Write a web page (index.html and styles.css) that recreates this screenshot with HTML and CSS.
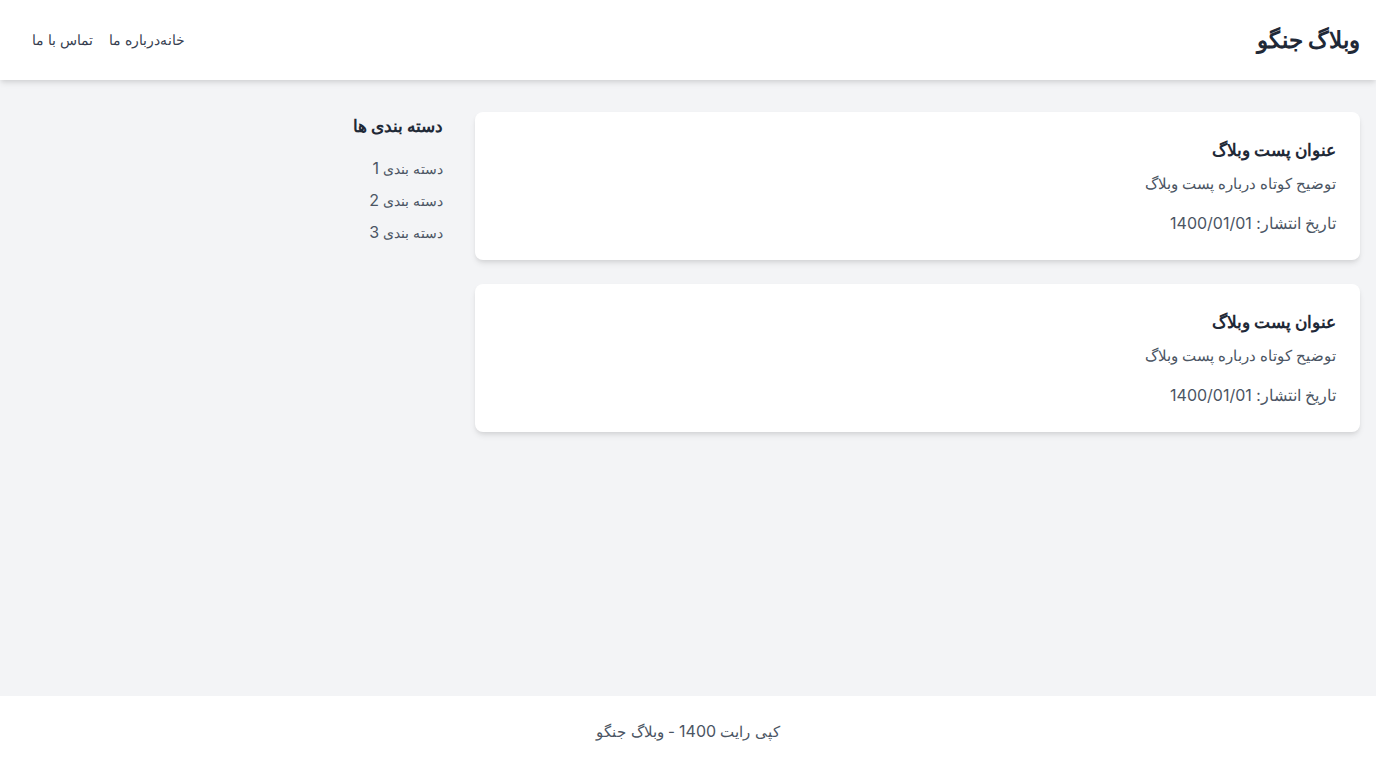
FILE: index.html
```html
<!DOCTYPE html>
<html lang="fa" dir="rtl">
<head>
<meta charset="utf-8">
<title>وبلاگ جنگو</title>
<link rel="stylesheet" href="styles.css">
</head>
<body>
<div class="page">
  <header class="header">
    <h1 class="brand">وبلاگ جنگو</h1>
    <nav class="nav">
      <a href="#" class="nav-link">خانه</a><a href="#" class="nav-link gap">درباره ما</a><a href="#" class="nav-link gap">تماس با ما</a>
    </nav>
  </header>
  <main class="main">
    <div class="grid">
      <section class="posts">
        <article class="card">
          <h2 class="card-title">عنوان پست وبلاگ</h2>
          <p class="card-desc">توضیح کوتاه درباره پست وبلاگ</p>
          <p class="card-date">تاریخ انتشار: <span class="num">1400/01/01</span></p>
        </article>
        <article class="card">
          <h2 class="card-title">عنوان پست وبلاگ</h2>
          <p class="card-desc">توضیح کوتاه درباره پست وبلاگ</p>
          <p class="card-date">تاریخ انتشار: <span class="num">1400/01/01</span></p>
        </article>
      </section>
      <aside class="sidebar">
        <h3 class="side-title">دسته بندی ها</h3>
        <ul class="side-list">
          <li class="side-item"><a href="#" class="side-link">دسته بندی <span class="num">1</span></a></li>
          <li class="side-item"><a href="#" class="side-link">دسته بندی <span class="num">2</span></a></li>
          <li class="side-item"><a href="#" class="side-link">دسته بندی <span class="num">3</span></a></li>
        </ul>
      </aside>
    </div>
  </main>
  <footer class="footer">
    <p class="footer-text">کپی رایت <span class="num">1400</span> - وبلاگ جنگو</p>
  </footer>
</div>
</body>
</html>
```

FILE: styles.css
```css
* { box-sizing: border-box; }
html, body { margin: 0; padding: 0; }
body {
  font-family: Inter, "Liberation Sans", sans-serif;
  font-size: 16px;
  line-height: 24px;
  background: #f3f4f6;
  color: #1f2937;
}
h1, h2, h3, p, ul { margin: 0; padding: 0; }
ul { list-style: none; }
a { text-decoration: none; color: inherit; }

.num { font-size: 16px; line-height: 1; }

.page {
  min-height: 100vh;
  display: flex;
  flex-direction: column;
}

.header {
  background: #ffffff;
  height: 80px;
  padding: 0 16px;
  display: flex;
  align-items: center;
  justify-content: space-between;
  box-shadow: 0 4px 6px -1px rgba(0,0,0,0.1), 0 2px 4px -1px rgba(0,0,0,0.06);
  position: relative;
  z-index: 1;
}
.brand {
  font-size: 23px;
  line-height: 32px;
  font-weight: 700;
  color: #1f2937;
}
.nav { display: flex; }
.nav-link { color: #374151; font-size: 14px; line-height: 24px; }
.nav-link.gap { margin-left: 16px; }

.main {
  flex-grow: 1;
  padding: 32px 16px;
}
.grid {
  display: grid;
  grid-template-columns: repeat(3, 1fr);
  gap: 32px;
}
.posts {
  grid-column: span 2;
  display: flex;
  flex-direction: column;
  gap: 24px;
}
.card {
  background: #ffffff;
  border-radius: 8px;
  padding: 24px;
  box-shadow: 0 4px 6px -1px rgba(0,0,0,0.1), 0 2px 4px -1px rgba(0,0,0,0.06);
}
.card-title {
  font-size: 17px;
  line-height: 28px;
  height: 28px;
  font-weight: 700;
  color: #1f2937;
  margin-bottom: 8px;
}
.card-desc {
  color: #4b5563;
  font-size: 14.5px;
  line-height: 24px;
  height: 24px;
  margin-bottom: 16px;
}
.card-date {
  color: #4b5563;
  font-size: 15.5px;
  line-height: 24px;
  height: 24px;
}

.side-title {
  font-size: 17px;
  line-height: 28px;
  height: 28px;
  font-weight: 700;
  color: #1f2937;
  margin-bottom: 16px;
}
.side-item {
  height: 24px;
  line-height: 24px;
  margin-bottom: 8px;
}
.side-link { color: #4b5563; font-size: 13.5px; }

.footer {
  background: #ffffff;
  padding: 24px 0;
  text-align: center;
}
.footer-text { color: #4b5563; font-size: 15px; line-height: 24px; height: 24px; }
```
